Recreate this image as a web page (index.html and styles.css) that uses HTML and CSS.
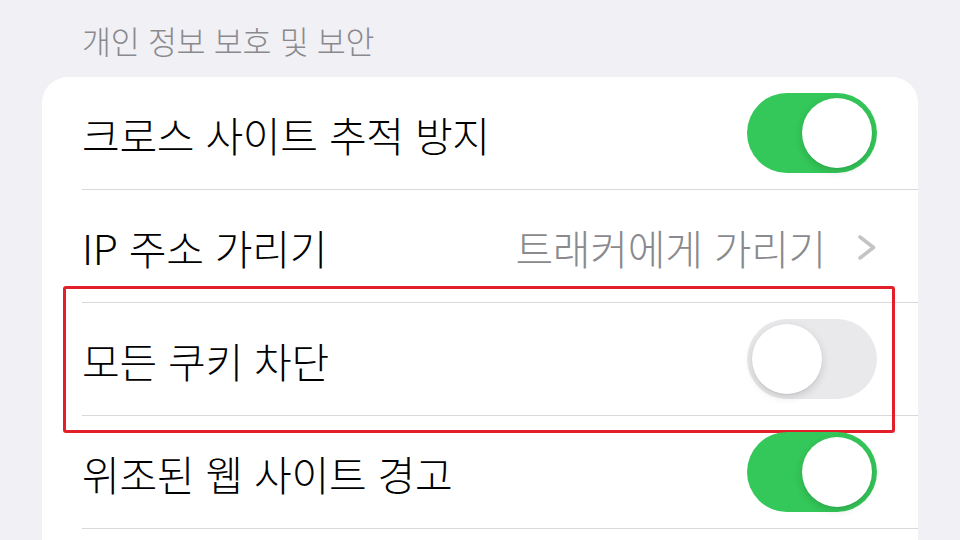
FILE: index.html
```html
<!DOCTYPE html>
<html lang="ko">
<head>
<meta charset="utf-8">
<link rel="stylesheet" href="styles.css">
</head>
<body>
  <div class="section-header">개인 정보 보호 및 보안</div>
  <div class="card">
    <div class="row">
      <div class="row-inner">
        <span class="label">크로스 사이트 추적 방지</span>
        <span class="toggle on"><span class="knob"></span></span>
      </div>
    </div>
    <div class="row">
      <div class="row-inner">
        <span class="label">IP 주소 가리기</span>
        <span class="value">트래커에게 가리기</span>
        <svg class="chevron" width="20" height="27" viewBox="0 0 20 27"><path d="M3 3 L16.5 13.5 L3 24" fill="none" stroke="#c4c4c7" stroke-width="3.6" stroke-linecap="round" stroke-linejoin="round"/></svg>
      </div>
    </div>
    <div class="row highlighted">
      <div class="row-inner">
        <span class="label">모든 쿠키 차단</span>
        <span class="toggle off"><span class="knob"></span></span>
      </div>
      <div class="highlight-box"></div>
    </div>
    <div class="row">
      <div class="row-inner">
        <span class="label">위조된 웹 사이트 경고</span>
        <span class="toggle on"><span class="knob"></span></span>
      </div>
    </div>
  </div>
</body>
</html>
```

FILE: styles.css
```css
html, body {
  margin: 0;
  padding: 0;
  overflow: hidden;
  height: 540px;
}

body {
  background: #f0f0f5;
  font-family: "Noto Sans CJK KR", "Noto Sans", sans-serif;
  font-weight: 300;
  color: #000;
}

.section-header {
  height: 77px;
  box-sizing: border-box;
  padding: 2px 0 0 82px;
  display: flex;
  align-items: center;
  font-size: 31.5px;
  color: #8a8a8e;
  letter-spacing: -0.3px;
}

.card {
  margin-left: 42px;
  width: 876px;
  background: #fff;
  border-radius: 26px 26px 0 0;
  padding-bottom: 60px;
}

.row {
  position: relative;
  padding-left: 40px;
}

.row-inner {
  height: 112px;
  border-bottom: 1.5px solid #d9d9dd;
  padding-right: 41px;
  display: flex;
  align-items: center;
}

.label {
  flex: 1;
  font-size: 41px;
  letter-spacing: -0.3px;
  padding-top: 1px;
}

.value {
  font-size: 41px;
  color: #8a8a8e;
  letter-spacing: -0.3px;
  margin-right: 31px;
  padding-top: 1px;
}

.chevron {
  display: block;
  margin-top: 2px;
}

.toggle {
  width: 130px;
  height: 80px;
  border-radius: 40px;
  display: flex;
  align-items: center;
  box-sizing: border-box;
  padding: 0 5px;
}

.toggle.on {
  background: #34c759;
  justify-content: flex-end;
}

.toggle.off {
  background: #e9e9eb;
  justify-content: flex-start;
}

.knob {
  width: 70px;
  height: 70px;
  border-radius: 50%;
  background: #fff;
  box-shadow: 0 3px 8px rgba(0, 0, 0, 0.15), 0 1px 1px rgba(0, 0, 0, 0.06);
}

.highlight-box {
  position: absolute;
  left: 21px;
  right: 23px;
  top: -17px;
  bottom: -17px;
  border: 3px solid #e3202a;
  border-radius: 3px;
  pointer-events: none;
}
```
